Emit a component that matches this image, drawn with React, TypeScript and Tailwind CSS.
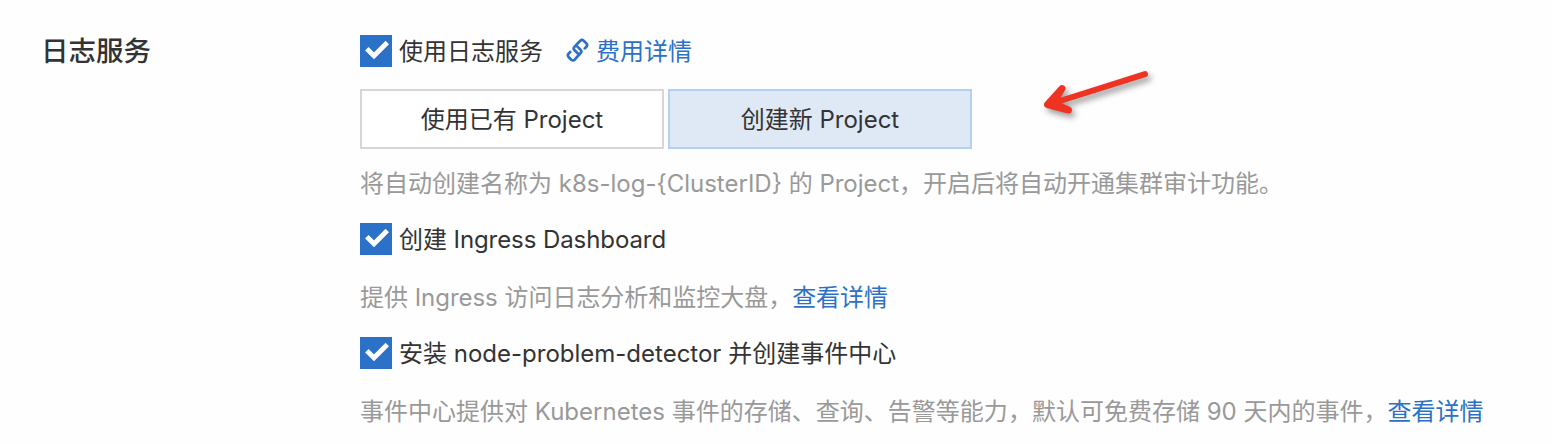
import React from 'react';

function Check() {
  return (
    <span className="flex h-8 w-8 shrink-0 bg-[#2b71c7]">
      <svg width="32" height="32" viewBox="0 0 32 32" fill="none">
        <path d="M6.8 13.7L14 20.8L27.3 7.5" stroke="#fff" strokeWidth="4.8" />
      </svg>
    </span>
  );
}

function LinkIcon() {
  return (
    <svg className="shrink-0" width="24" height="26" viewBox="0 0 24 26" fill="none" stroke="#2b71c7" strokeWidth="2.7" strokeLinecap="round" strokeLinejoin="round">
      <path d="M11.6 15.2L8.4 12Q6.9 10.4 8.4 8.8L14.3 2.7Q16 1.2 17.7 2.7L20.4 5.4Q21.9 7.1 20.4 8.8L18.8 10.4" />
      <path d="M11.4 8.6L14.6 11.8Q16.1 13.4 14.6 15L8.7 21.7Q7 23.2 5.3 21.7L2.6 19Q1.1 17.3 2.6 15.6L4.2 14" />
    </svg>
  );
}

export default function App() {
  return (
    <main className="relative flex h-[444px] w-[1552px] overflow-hidden bg-[#fefefe] font-['Inter','Noto_Sans_CJK_SC',sans-serif] text-[24px] whitespace-nowrap text-[#333]">
      <h2 className="w-[360px] pt-[31px] pl-[41px] text-[27.5px] leading-10 font-medium">日志服务</h2>
      <section className="flex flex-col items-start">
        <div className="mt-[35px] flex h-8 items-center">
          <Check />
          <span className="ml-[7px] pt-[2px]">使用日志服务</span>
          <a className="ml-[23px] flex items-center gap-[6px] text-[#2b71c7]"><LinkIcon /><span className="pt-[2px]">费用详情</span></a>
        </div>
        <div className="mt-[22px] flex gap-1">
          <button className="h-[60px] w-[304px] border-2 border-[#d6d6d6] bg-white pt-[2px]">使用已有 Project</button>
          <button className="h-[60px] w-[304px] border-2 border-[#b3d1ee] bg-[#dfe8f5] pt-[2px]">创建新 Project</button>
        </div>
        <p className="mt-[19px] h-8 leading-8 text-[#999]">将自动创建名称为 k8s-log-{'{ClusterID}'} 的 Project，开启后将自动开通集群审计功能。</p>
        <div className="mt-[23px] flex h-8 items-center gap-[7px]"><Check /><span className="pt-[2px] tracking-[-0.08px]">创建 Ingress Dashboard</span></div>
        <p className="mt-[27px] h-8 leading-8 tracking-[-0.03px] text-[#999]">提供 Ingress 访问日志分析和监控大盘，<a className="text-[#2b71c7]">查看详情</a></p>
        <div className="mt-[23px] flex h-8 items-center gap-[7px]"><Check /><span className="pt-[2px]">安装 node-problem-detector 并创建事件中心</span></div>
        <p className="mt-[27px] h-8 leading-8 tracking-[0.01px] text-[#999]">事件中心提供对 Kubernetes 事件的存储、查询、告警等能力，默认可免费存储 90 天内的事件，<a className="text-[#2b71c7]">查看详情</a></p>
      </section>
      <svg className="absolute top-[60px] left-[1030px] drop-shadow-[3px_4px_3px_rgba(0,0,0,0.4)]" width="140" height="70" viewBox="1030 60 140 70" fill="#ee3322" stroke="#ee3322" strokeWidth="6" strokeLinecap="round" strokeLinejoin="round">
        <path d="M1145 74.2L1055 102.5" />
        <path strokeWidth="7" d="M1062 88.5L1047.5 104.5L1068.5 110L1053 103.5Z" />
      </svg>
    </main>
  );
}
